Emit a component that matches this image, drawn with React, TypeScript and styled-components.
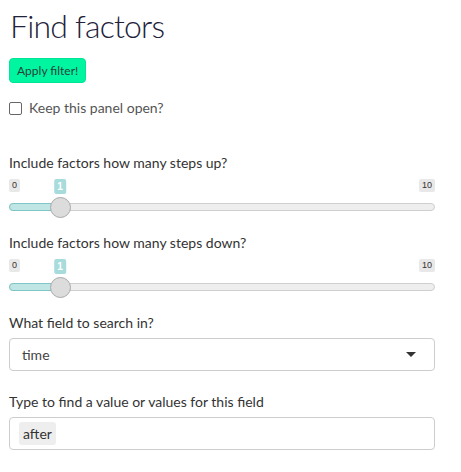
import React from "react";
import styled, { createGlobalStyle } from "styled-components";

const Global = createGlobalStyle`
  html, body { margin: 0; padding: 0; background: #fff; }
  body { font-family: Lato, "Noto Sans", sans-serif; color: #333; }
  * { box-sizing: border-box; }
`;

const Page = styled.div`
  width: 461px;
  padding: 6px 26px 20px 9px;
  display: flex;
  flex-direction: column;
`;

const Title = styled.h2`
  margin: 0 0 0 1px;
  font-size: 32px;
  font-weight: 300;
  line-height: 40px;
  color: #22223a;
  letter-spacing: -0.8px;
`;

const Button = styled.button`
  align-self: flex-start;
  margin-top: 12px;
  height: 25px;
  padding: 0 7px;
  border: 1px solid #00e595;
  border-radius: 4px;
  background: #00f5a0;
  color: #25423a;
  font-family: inherit;
  font-size: 12px;
  line-height: 23px;
`;

const CheckRow = styled.label`
  display: flex;
  align-items: center;
  gap: 7px;
  margin-top: 18px;
  font-size: 14px;
  color: #555;
  line-height: 14px;
`;

const Box = styled.span`
  width: 13px;
  height: 13px;
  border: 1px solid #666;
  border-radius: 2px;
  background: #fff;
`;

const Group = styled.div<{ $mt: number }>`
  margin-top: ${(p) => p.$mt}px;
  display: flex;
  flex-direction: column;
`;

const Label = styled.div`
  font-size: 14px;
  line-height: 18px;
  color: #333;
`;

const Grid = styled.div`
  position: relative;
  display: flex;
  justify-content: space-between;
  margin-top: 7px;
  height: 14px;
`;

const Edge = styled.span`
  background: #e8e8e8;
  color: #333;
  font-size: 9px;
  font-family: "Liberation Sans", Arial, sans-serif;
  line-height: 13px;
  height: 13px;
  padding: 0 3px;
  border-radius: 2px;
`;

const Badge = styled.span`
  position: absolute;
  top: 0;
  transform: translateX(-50%);
  background: #a8dcdc;
  color: #fff;
  font-weight: 700;
  font-size: 10px;
  font-family: "Liberation Sans", Arial, sans-serif;
  line-height: 15px;
  height: 15px;
  padding: 0 3px;
  border-radius: 2px;
`;

const Track = styled.div`
  position: relative;
  margin-top: 10px;
  height: 8px;
  border: 1px solid #cfcfcf;
  border-radius: 4px;
  background: #eeeeee;
`;

const Fill = styled.div`
  position: absolute;
  left: -1px;
  top: -1px;
  height: 8px;
  border: 1px solid #7ec6c6;
  border-radius: 4px 0 0 4px;
  background: #bfe5e5;
`;

const Handle = styled.div`
  position: absolute;
  top: 50%;
  width: 21px;
  height: 21px;
  margin-top: -10.5px;
  margin-left: -10.5px;
  border-radius: 50%;
  background: #dcdcdc;
  border: 1px solid #a8a8a8;
`;

const Field = styled.div`
  margin-top: 6px;
  height: 33px;
  border: 1px solid #cdcdcd;
  border-radius: 4px;
  display: flex;
  align-items: center;
  padding: 0 18px 0 12px;
  font-size: 14px;
  color: #444;
`;

const Value = styled.span`
  flex: 1;
`;

const Caret = styled.span`
  width: 0;
  height: 0;
  border-left: 5px solid transparent;
  border-right: 5px solid transparent;
  border-top: 5px solid #333;
`;

const InputField = styled(Field)`
  padding: 0 9px;
`;

const Chip = styled.span`
  background: #eeeeee;
  border-radius: 3px;
  padding: 0 4px;
  height: 23px;
  line-height: 23px;
  color: #333;
  font-size: 14px;
`;

function Slider({ label, value, min, max, mt }: { label: string; value: number; min: number; max: number; mt: number }) {
  const trackW = 426;
  const hw = 21;
  const pos = hw / 2 + ((value - min) / (max - min)) * (trackW - hw);
  return (
    <Group $mt={mt}>
      <Label>{label}</Label>
      <Grid>
        <Edge>{min}</Edge>
        <Badge style={{ left: pos }}>{value}</Badge>
        <Edge>{max}</Edge>
      </Grid>
      <Track>
        <Fill style={{ width: pos }} />
        <Handle style={{ left: pos - 1 }} />
      </Track>
    </Group>
  );
}

export default function App() {
  return (
    <Page>
      <Global />
      <Title>Find factors</Title>
      <Button>Apply filter!</Button>
      <CheckRow>
        <Box />
        Keep this panel open?
      </CheckRow>
      <Slider label="Include factors how many steps up?" value={1} min={0} max={10} mt={39} />
      <Slider label="Include factors how many steps down?" value={1} min={0} max={10} mt={23} />
      <Group $mt={23}>
        <Label>What field to search in?</Label>
        <Field>
          <Value>time</Value>
          <Caret />
        </Field>
      </Group>
      <Group $mt={22}>
        <Label>Type to find a value or values for this field</Label>
        <InputField>
          <Chip>after</Chip>
        </InputField>
      </Group>
    </Page>
  );
}
